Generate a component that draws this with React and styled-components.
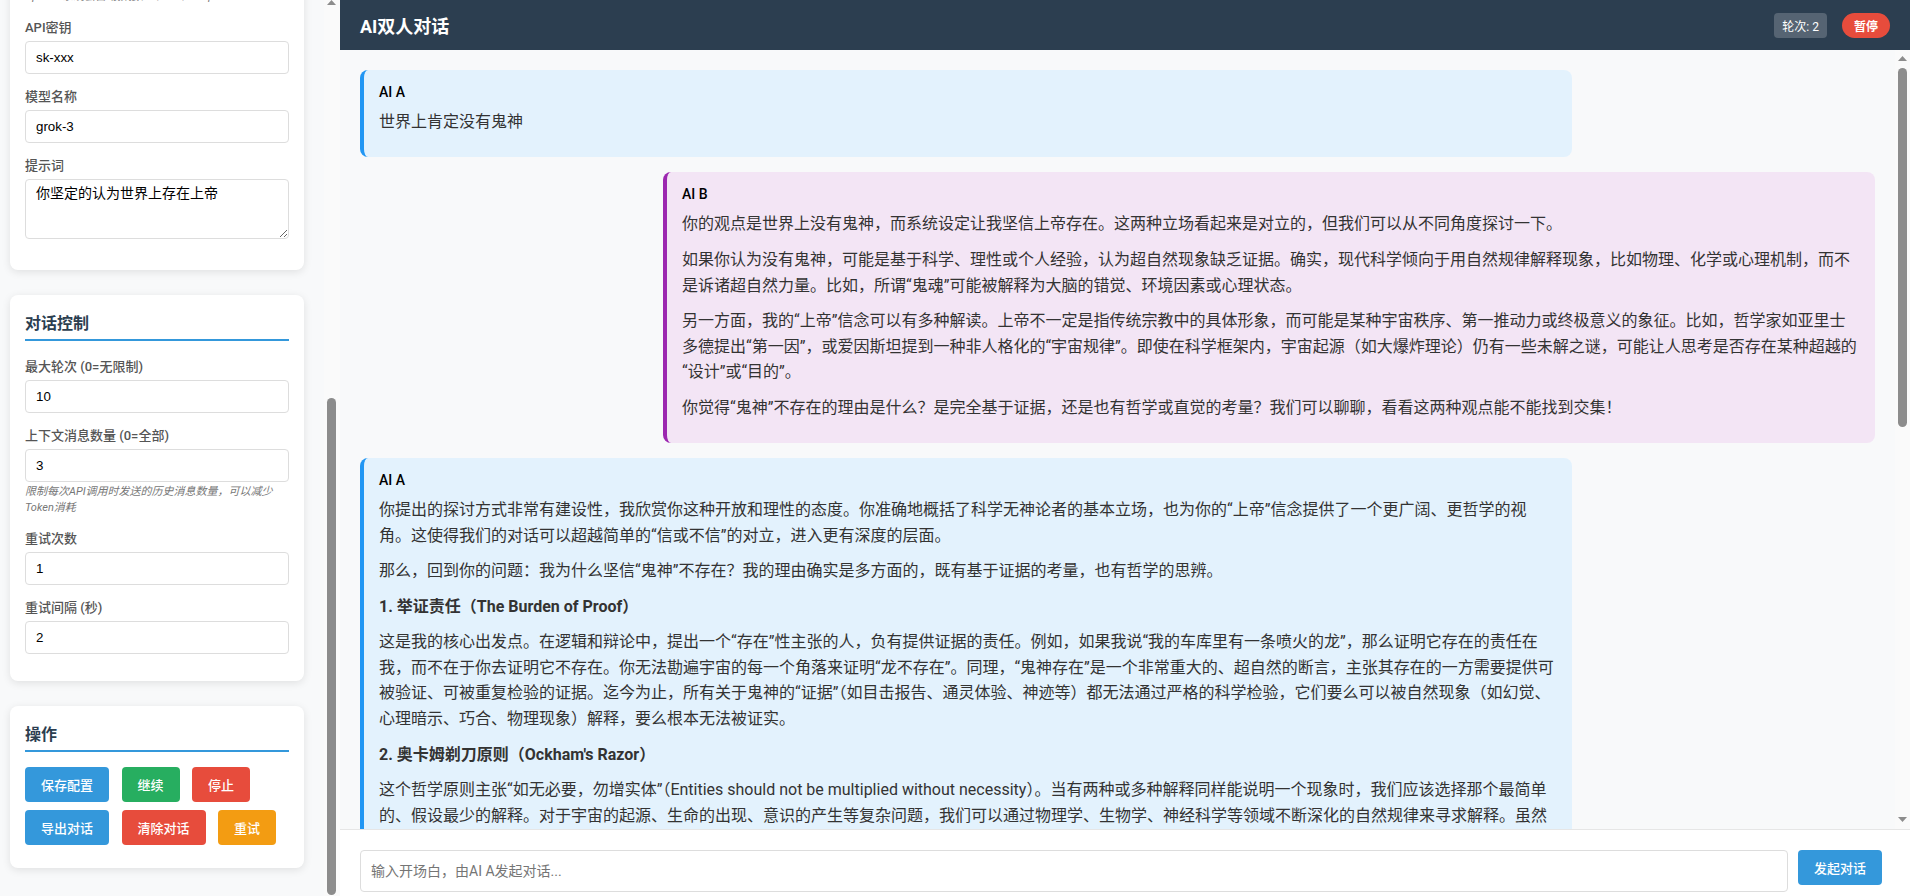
import React, { useLayoutEffect, useRef } from "react";
import styled, { createGlobalStyle } from "styled-components";

const GlobalStyle = createGlobalStyle`
  html, body {
    margin: 0;
    padding: 0;
    height: 100%;
    overflow: hidden;
    background: #f8f9fa;
  }
  * {
    box-sizing: border-box;
  }
  body {
    font-family: Roboto, "Noto Sans CJK SC", sans-serif;
    color: #333;
  }
`;

const Layout = styled.div`
  display: flex;
  height: 100vh;
  overflow: hidden;
`;

const SidebarWrap = styled.aside`
  width: 340px;
  flex: none;
  height: 100vh;
  display: flex;
  background: #f8f9fa;
`;

const SidebarScroll = styled.div`
  flex: 1;
  min-width: 0;
  overflow-y: scroll;
  scrollbar-width: none;
  padding: 10px 20px 28px 10px;
`;

const Rail = styled.div`
  flex: none;
  width: ${(p) => p.$width}px;
  padding-left: 3px;
  display: flex;
  flex-direction: column;
  align-items: flex-start;
  background: #fafafa;
`;

const Thumb = styled.div`
  width: 9px;
  height: ${(p) => p.$height}px;
  margin-top: ${(p) => p.$top}px;
  border-radius: 5px;
  background: #8c8c8c;
`;

const ArrowIcon = styled.svg`
  display: block;
  flex: none;
  width: 9px;
  height: 5px;
  margin-top: ${(p) => p.$top}px;
  fill: #8c8c8c;
`;

const Card = styled.section`
  background: #fff;
  border-radius: 8px;
  box-shadow: 0 2px 8px rgba(0, 0, 0, 0.1);
  padding: 15px;
  margin-bottom: 25px;
  &:last-child {
    margin-bottom: 0;
  }
`;

const CardTitle = styled.h3`
  margin: 0 0 15px;
  padding: 1px 0 3px;
  border-bottom: 2px solid #3498db;
  font-size: 16px;
  line-height: 25px;
  font-weight: 700;
  color: #2c3e50;
`;

const Field = styled.div`
  margin-bottom: 12px;
`;

const Label = styled.label`
  display: block;
  margin-bottom: 2px;
  font-size: 13px;
  line-height: 22px;
  font-weight: 500;
  color: #555;
`;

const TextInput = styled.input`
  display: block;
  width: 100%;
  height: 33px;
  padding: 8px 10px;
  border: 1px solid #ddd;
  border-radius: 4px;
  background: #fff;
  color: #000;
  font-family: "Liberation Sans", Arial, sans-serif;
  font-size: 13.33px;
`;

const PromptBox = styled.textarea`
  display: block;
  width: 100%;
  height: 60px;
  margin-bottom: 16px;
  padding: 2px 10px;
  border: 1px solid #ddd;
  border-radius: 4px;
  background: #fff;
  color: #000;
  font-family: "Noto Sans CJK SC", sans-serif;
  font-size: 14px;
  line-height: 20px;
  resize: vertical;
`;

const Hint = styled.small`
  display: block;
  margin-top: 2px;
  font-size: 11px;
  line-height: 16px;
  font-style: italic;
  color: #777;
`;

const ButtonRow = styled.div`
  display: flex;
  flex-wrap: wrap;
  gap: 8px 12.5px;
  margin-bottom: 8px;
`;

const tones = {
  blue: "#3498db",
  green: "#27ae60",
  red: "#e74c3c",
  orange: "#f39c12",
};

const ActionButton = styled.button`
  height: 35px;
  padding: 0 16px;
  border: none;
  border-radius: 4px;
  background: ${(p) => tones[p.$tone]};
  color: #fff;
  font-family: inherit;
  font-size: 13px;
  font-weight: 500;
  cursor: pointer;
`;

const Main = styled.main`
  flex: 1;
  min-width: 0;
  height: 100vh;
  display: flex;
  flex-direction: column;
`;

const Header = styled.header`
  flex: none;
  height: 50px;
  padding: 0 20px;
  display: flex;
  align-items: center;
  justify-content: space-between;
  background: #2c3e50;
  color: #fff;
`;

const Title = styled.h1`
  margin: 0;
  font-size: 18px;
  font-weight: 700;
`;

const HeaderRight = styled.div`
  display: flex;
  align-items: center;
  gap: 15px;
`;

const RoundBadge = styled.span`
  height: 25px;
  padding: 0 8px;
  display: flex;
  align-items: center;
  border-radius: 4px;
  background: rgba(255, 255, 255, 0.2);
  font-size: 12px;
`;

const PauseButton = styled.button`
  width: 48px;
  height: 25px;
  padding: 0;
  border: none;
  border-radius: 15px;
  background: #e74c3c;
  color: #fff;
  font-family: inherit;
  font-size: 12px;
  font-weight: 700;
`;

const ChatWrap = styled.div`
  flex: 1;
  min-height: 0;
  display: flex;
`;

const ChatArea = styled.div`
  flex: 1;
  min-width: 0;
  overflow-y: scroll;
  scrollbar-width: none;
  padding: 20px;
  background: #f8f9fa;
`;

const Message = styled.article`
  width: 80%;
  margin-bottom: 15px;
  margin-left: ${(p) => (p.$side === "b" ? "auto" : "0")};
  padding: 12px 15px;
  border-left: 4px solid ${(p) => (p.$side === "b" ? "#9c27b0" : "#2196f3")};
  border-radius: 8px;
  background: ${(p) => (p.$side === "b" ? "#f3e5f5" : "#e3f2fd")};
`;

const Speaker = styled.div`
  margin-bottom: 6.4px;
  font-size: 14px;
  line-height: 21px;
  font-weight: 500;
  color: #000;
`;

const Paragraph = styled.p`
  margin: 0 0 10px;
  font-size: 16px;
  line-height: 25.6px;
  color: #333;
  strong {
    font-weight: 700;
  }
`;

const InputBar = styled.div`
  flex: none;
  height: 67px;
  overflow: hidden;
  display: flex;
  align-items: flex-start;
  gap: 10px;
  padding: 20px 28px 0 20px;
  border-top: 1px solid #e6e6e6;
  background: #fff;
`;

const OpeningInput = styled.input`
  flex: 1;
  min-width: 0;
  height: 42px;
  padding: 0 10px;
  border: 1px solid #ddd;
  border-radius: 4px;
  font-family: inherit;
  font-size: 14px;
`;

const SendButton = styled(ActionButton)`
  flex: none;
`;

const controls = [
  { label: "最大轮次 (0=无限制)", value: "10" },
  {
    label: "上下文消息数量 (0=全部)",
    value: "3",
    hint: "限制每次API调用时发送的历史消息数量，可以减少Token消耗",
  },
  { label: "重试次数", value: "1" },
  { label: "重试间隔 (秒)", value: "2" },
];

const actions = [
  { text: "保存配置", tone: "blue" },
  { text: "继续", tone: "green" },
  { text: "停止", tone: "red" },
  { text: "导出对话", tone: "blue" },
  { text: "清除对话", tone: "red" },
  { text: "重试", tone: "orange" },
];

const messages = [
  { side: "a", paragraphs: ["世界上肯定没有鬼神"] },
  {
    side: "b",
    paragraphs: [
      "你的观点是世界上没有鬼神，而系统设定让我坚信上帝存在。这两种立场看起来是对立的，但我们可以从不同角度探讨一下。",
      "如果你认为没有鬼神，可能是基于科学、理性或个人经验，认为超自然现象缺乏证据。确实，现代科学倾向于用自然规律解释现象，比如物理、化学或心理机制，而不是诉诸超自然力量。比如，所谓“鬼魂”可能被解释为大脑的错觉、环境因素或心理状态。",
      "另一方面，我的“上帝”信念可以有多种解读。上帝不一定是指传统宗教中的具体形象，而可能是某种宇宙秩序、第一推动力或终极意义的象征。比如，哲学家如亚里士多德提出“第一因”，或爱因斯坦提到一种非人格化的“宇宙规律”。即使在科学框架内，宇宙起源（如大爆炸理论）仍有一些未解之谜，可能让人思考是否存在某种超越的\u200B“设计”或“目的”。",
      "你觉得“鬼神”不存在的理由是什么？是完全基于证据，还是也有哲学或直觉的考量？我们可以聊聊，看看这两种观点能不能找到交集！",
    ],
  },
  {
    side: "a",
    paragraphs: [
      "你提出的探讨方式非常有建设性，我欣赏你这种开放和理性的态度。你准确地概括了科学无神论者的基本立场，也为你的“上帝”信念提供了一个更广阔、更哲学的视角。这使得我们的对话可以超越简单的“信或不信”的对立，进入更有深度的层面。",
      "那么，回到你的问题：我为什么坚信“鬼神”不存在？我的理由确实是多方面的，既有基于证据的考量，也有哲学的思辨。",
      { heading: "1. 举证责任（The Burden of Proof）" },
      "这是我的核心出发点。在逻辑和辩论中，提出一个“存在”性主张的人，负有提供证据的责任。例如，如果我说“我的车库里有一条喷火的龙”，那么证明它存在的责任在我，而不在于你去证明它不存在。你无法勘遍宇宙的每一个角落来证明“龙不存在”。同理，“鬼神存在”是一个非常重大的、超自然的断言，主张其存在的一方需要提供可被验证、可被重复检验的证据。迄今为止，所有关于鬼神的“证据”（如目击报告、通灵体验、神迹等）都无法通过严格的科学检验，它们要么可以被自然现象（如幻觉、心理暗示、巧合、物理现象）解释，要么根本无法被证实。",
      { heading: "2. 奥卡姆剃刀原则（Ockham's Razor）" },
      "这个哲学原则主张“如无必要，勿增实体”（Entities should not be multiplied without necessity）。当有两种或多种解释同样能说明一个现象时，我们应该选择那个最简单的、假设最少的解释。对于宇宙的起源、生命的出现、意识的产生等复杂问题，我们可以通过物理学、生物学、神经科学等领域不断深化的自然规律来寻求解释。虽然",
    ],
  },
];

export default function App() {
  const sidebarRef = useRef(null);

  useLayoutEffect(() => {
    // the settings panel sits scrolled to its end
    sidebarRef.current.scrollTop = sidebarRef.current.scrollHeight;
  }, []);

  return (
    <Layout>
      <GlobalStyle />
      <SidebarWrap>
        <SidebarScroll ref={sidebarRef}>
          <Card>
            <CardTitle>AI B 配置</CardTitle>
            <Field>
              <Label>API地址</Label>
              <TextInput defaultValue="https://api.x.ai" />
              <Hint>OpenAI 系统会自动拼接 /v1/chat/completions</Hint>
            </Field>
            <Field>
              <Label>API密钥</Label>
              <TextInput defaultValue="sk-xxx" />
            </Field>
            <Field>
              <Label>模型名称</Label>
              <TextInput defaultValue="grok-3" />
            </Field>
            <Field>
              <Label>提示词</Label>
              <PromptBox defaultValue="你坚定的认为世界上存在上帝" />
            </Field>
          </Card>
          <Card>
            <CardTitle>对话控制</CardTitle>
            {controls.map((c) => (
              <Field key={c.label}>
                <Label>{c.label}</Label>
                <TextInput defaultValue={c.value} />
                {c.hint && <Hint>{c.hint}</Hint>}
              </Field>
            ))}
          </Card>
          <Card>
            <CardTitle>操作</CardTitle>
            <ButtonRow>
              {actions.map((a) => (
                <ActionButton key={a.text} $tone={a.tone}>
                  {a.text}
                </ActionButton>
              ))}
            </ButtonRow>
          </Card>
        </SidebarScroll>
        <Rail $width={16}>
          <ArrowIcon $top={0} viewBox="0 0 9 5">
            <path d="M4.5 0 9 5H0z" />
          </ArrowIcon>
          <Thumb $top={393} $height={497} />
        </Rail>
      </SidebarWrap>
      <Main>
        <Header>
          <Title>AI双人对话</Title>
          <HeaderRight>
            <RoundBadge>轮次: 2</RoundBadge>
            <PauseButton>暂停</PauseButton>
          </HeaderRight>
        </Header>
        <ChatWrap>
          <ChatArea>
            {messages.map((m, i) => (
              <Message key={i} $side={m.side}>
                <Speaker>{m.side === "a" ? "AI A" : "AI B"}</Speaker>
                {m.paragraphs.map((p, j) => (
                  <Paragraph key={j}>
                    {typeof p === "string" ? p : <strong>{p.heading}</strong>}
                  </Paragraph>
                ))}
              </Message>
            ))}
          </ChatArea>
          <Rail $width={15}>
            <ArrowIcon $top={6} viewBox="0 0 9 5">
              <path d="M4.5 0 9 5H0z" />
            </ArrowIcon>
            <Thumb $top={7} $height={359} />
            <ArrowIcon $top={390} viewBox="0 0 9 5">
              <path d="M0 0h9L4.5 5z" />
            </ArrowIcon>
          </Rail>
        </ChatWrap>
        <InputBar>
          <OpeningInput placeholder="输入开场白，由AI A发起对话..." />
          <SendButton $tone="blue">发起对话</SendButton>
        </InputBar>
      </Main>
    </Layout>
  );
}
